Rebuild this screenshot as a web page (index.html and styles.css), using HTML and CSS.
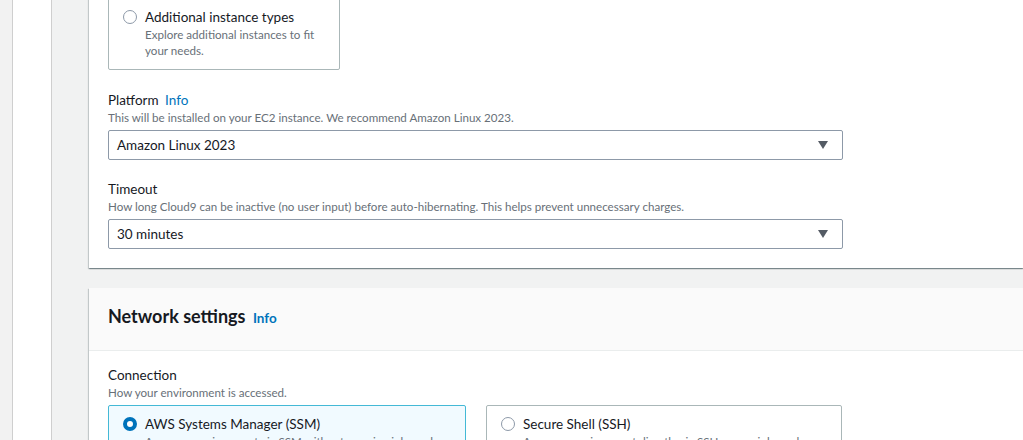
FILE: index.html
```html
<!DOCTYPE html>
<html>
<head>
  <meta charset="utf-8"/>
  <title>Create environment</title>
  <link rel="stylesheet" href="styles.css">
</head>
<body>

<div class="rail"></div>
<div class="drawer"></div>

<main class="content">

  <section class="card card-first">
    <div class="card-body">
      <div class="tiles tiles-single">
        <label class="tile">
          <span class="radio"></span>
          <span class="tile-text">
            <span class="tile-title">Additional instance types</span>
            <span class="tile-desc">Explore additional instances to fit your needs.</span>
          </span>
        </label>
      </div>

      <div class="field">
        <div class="field-label">Platform <a href="#" class="info">Info</a></div>
        <div class="field-desc">This will be installed on your EC2 instance. We recommend Amazon Linux 2023.</div>
        <div class="select">
          <span>Amazon Linux 2023</span>
          <span class="caret"></span>
        </div>
      </div>

      <div class="field">
        <div class="field-label">Timeout</div>
        <div class="field-desc">How long Cloud9 can be inactive (no user input) before auto-hibernating. This helps prevent unnecessary charges.</div>
        <div class="select">
          <span>30 minutes</span>
          <span class="caret"></span>
        </div>
      </div>
    </div>
  </section>

  <section class="card">
    <div class="card-header">
      <h2>Network settings <a href="#" class="info">Info</a></h2>
    </div>
    <div class="card-body">
      <div class="field field-top">
        <div class="field-label">Connection</div>
        <div class="field-desc">How your environment is accessed.</div>
        <div class="tiles">
          <label class="tile selected">
            <span class="radio"></span>
            <span class="tile-text">
              <span class="tile-title">AWS Systems Manager (SSM)</span>
              <span class="tile-desc">Accesses environment via SSM without opening inbound ports (no ingress).</span>
            </span>
          </label>
          <label class="tile">
            <span class="radio"></span>
            <span class="tile-text">
              <span class="tile-title">Secure Shell (SSH)</span>
              <span class="tile-desc">Accesses environment directly via SSH, opens inbound ports.</span>
            </span>
          </label>
        </div>
      </div>
    </div>
  </section>

</main>

</body>
</html>
```

FILE: styles.css
```css
body {
  margin: 0;
  display: flex;
  height: 440px;
  overflow: hidden;
  background-color: #f2f3f3;
  font-family: Lato, "Open Sans", sans-serif;
  color: #16191f;
}
a {
  text-decoration: none;
}
.rail {
  width: 12px;
  flex: none;
  background-color: #f2f2f2;
}
.drawer {
  width: 38px;
  flex: none;
  background-color: #fff;
  border-left: 1px solid #cfcfcf;
  border-right: 1px solid #cfcfcf;
}
.content {
  flex: 1;
  padding-left: 37px;
  margin-top: -22px;
  background-color: #f1f2f2;
}
.card {
  background-color: #fff;
  margin-bottom: 20px;
  box-shadow: 0 1px 1px 0 rgba(0, 28, 36, 0.3), 1px 1px 1px 0 rgba(0, 28, 36, 0.15), -1px 1px 1px 0 rgba(0, 28, 36, 0.15);
}
.card-body {
  padding: 20px 20px 19px 19px;
}
.card-header {
  background-color: #fafafa;
  border-bottom: 1px solid #eaeded;
  padding: 17px 19px 21px;
}
.card-header h2 {
  margin: 0;
  font-size: 18px;
  line-height: 22px;
  font-weight: 700;
}
.card-header .info {
  font-size: 13.5px;
  margin-left: 3px;
}
.info {
  color: #0073bb;
  font-weight: 700;
}
.field-label .info {
  font-weight: normal;
  margin-left: 3px;
}
.field {
  margin-top: 20px;
  max-width: 735px;
}
.field + .field {
  margin-top: 19px;
}
.field-top {
  margin-top: -6px;
}
.field-label {
  font-size: 13.5px;
  line-height: 20px;
}
.field-desc {
  font-size: 11.6px;
  line-height: 16px;
  color: #687078;
  margin-bottom: 4px;
}
.select {
  display: flex;
  align-items: center;
  justify-content: space-between;
  height: 28px;
  padding: 0 14px 0 8px;
  border: 1px solid #8d99a8;
  border-radius: 2px;
  font-size: 13.5px;
}
.caret {
  width: 0;
  height: 0;
  border-left: 5.5px solid transparent;
  border-right: 5.5px solid transparent;
  border-top: 8px solid #545b64;
}
.tiles {
  display: grid;
  grid-template-columns: 358px 356px;
  gap: 20px;
}
.tiles-single {
  grid-template-columns: 232px;
}
.tile {
  display: flex;
  align-items: flex-start;
  gap: 8px;
  padding: 8px 14px 10px;
  border: 1px solid #aab7b8;
  border-radius: 2px;
  background-color: #fff;
}
.tile.selected {
  border-color: #44b9d6;
  background-color: #f1faff;
}
.radio {
  flex: none;
  box-sizing: border-box;
  width: 14px;
  height: 14px;
  margin-top: 3px;
  border: 1.5px solid #8d99a8;
  border-radius: 50%;
  background-color: #fff;
}
.selected .radio {
  border: 4px solid #0073bb;
}
.tile-text {
  display: flex;
  flex-direction: column;
}
.tile-title {
  font-size: 13.5px;
  line-height: 20px;
}
.tile-desc {
  font-size: 11.6px;
  line-height: 16px;
  color: #687078;
}
```
